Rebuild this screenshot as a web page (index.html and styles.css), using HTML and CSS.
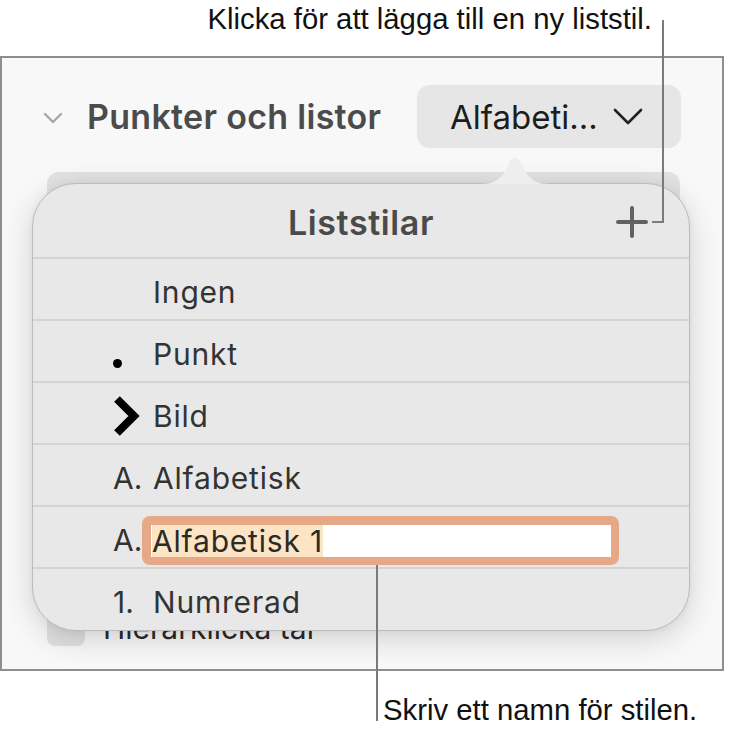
FILE: index.html
```html
<!DOCTYPE html>
<html lang="sv">
<head>
    <meta charset="UTF-8">
    <meta name="viewport" content="width=device-width, initial-scale=1.0">
    <title>Liststilar</title>
    <link rel="stylesheet" href="styles.css">
</head>
<body>
    <div class="page">
        <p class="note note-top">Klicka för att lägga till en ny liststil.</p>

        <section class="panel">
            <div class="section-head">
                <svg class="disclosure" width="20" height="12" viewBox="0 0 20 12">
                    <polyline points="2,2 10,10 18,2" fill="none" stroke="#a6a6a6" stroke-width="2.4" stroke-linecap="round" stroke-linejoin="round"/>
                </svg>
                <h2>Punkter och listor</h2>
                <button class="style-select">
                    <span>Alfabeti...</span>
                    <svg width="30" height="17" viewBox="0 0 30 17">
                        <polyline points="2,2 15,15 28,2" fill="none" stroke="#222" stroke-width="2.6" stroke-linecap="round" stroke-linejoin="round"/>
                    </svg>
                </button>
            </div>

            <div class="style-bar"></div>

            <div class="check-row">
                <span class="checkbox"></span>
                <span>Hierarklicka tal</span>
            </div>

            <div class="popover">
                <svg class="notch" width="70" height="30" viewBox="0 0 70 30">
                    <path d="M0,29 C12,29 18,26 24,18 L30,6 C32,2 38,2 40,6 L46,18 C52,26 58,29 70,29 Z" fill="#eeeeee"/>
                </svg>
                <div class="popover-head">
                    <span></span>
                    <h3>Liststilar</h3>
                    <svg class="add" width="32" height="32" viewBox="0 0 32 32">
                        <path d="M16 2 V30 M2 16 H30" stroke="#626262" stroke-width="4" stroke-linecap="round"/>
                    </svg>
                </div>
                <ul class="styles">
                    <li><span class="marker"></span>Ingen</li>
                    <li><span class="marker"><span class="dot"></span></span>Punkt</li>
                    <li>
                        <span class="marker">
                            <svg width="28" height="42" viewBox="0 0 28 42">
                                <polyline points="4,4 21,21 4,38" fill="none" stroke="#000" stroke-width="8" stroke-linejoin="miter"/>
                            </svg>
                        </span>Bild
                    </li>
                    <li><span class="marker">A.</span>Alfabetisk</li>
                    <li>
                        <span class="marker">A.</span>
                        <div class="name-field"><div class="name-inner"><span class="selected">Alfabetisk 1</span></div></div>
                    </li>
                    <li><span class="marker">1.</span>Numrerad</li>
                </ul>
            </div>
        </section>

        <p class="note note-bottom">Skriv ett namn för stilen.</p>

        <span class="leader leader-top"></span>
        <span class="leader leader-top-tick"></span>
        <span class="leader leader-bottom"></span>
    </div>
</body>
</html>
```

FILE: styles.css
```css
body {
    margin: 0;
    background: #ffffff;
    font-family: Inter, "Noto Sans", sans-serif;
}

.page {
    position: relative;
    width: 732px;
    height: 732px;
    overflow: hidden;
}

.note {
    margin: 0;
    font-family: "Liberation Sans", Arial, sans-serif;
    font-size: 29.3px;
    line-height: 36px;
    color: #111;
}

.note-top {
    height: 56px;
    padding-top: 1px;
    padding-right: 80px;
    text-align: right;
    box-sizing: border-box;
}

.note-bottom {
    margin-top: 21px;
    padding-left: 383px;
}

.leader {
    position: absolute;
    background: #7a7a7a;
}

.leader-top {
    left: 662px;
    top: 20px;
    width: 2px;
    height: 203px;
}

.leader-top-tick {
    left: 652px;
    top: 221px;
    width: 11px;
    height: 2px;
}

.leader-bottom {
    left: 376px;
    top: 565px;
    width: 2px;
    height: 156px;
}

.panel {
    position: relative;
    width: 724px;
    height: 615px;
    box-sizing: border-box;
    border: 2px solid #8e8e8e;
    background: #f8f8f8;
    padding: 27px 41px 0 41px;
}

.section-head {
    display: flex;
    align-items: center;
    height: 63px;
}

.disclosure {
    flex: none;
    margin-top: 2px;
}

.section-head h2 {
    margin: 0 0 0 24px;
    font-size: 34px;
    font-weight: 600;
    color: #4b4b4b;
    letter-spacing: 0.3px;
}

.style-select {
    margin-left: auto;
    width: 264px;
    height: 63px;
    border: none;
    border-radius: 13px;
    background: #e6e6e6;
    display: flex;
    align-items: center;
    justify-content: space-between;
    padding: 0 38px 0 33px;
    font-family: inherit;
    font-size: 33px;
    color: #1d1d1d;
}

.style-bar {
    margin: 24px 0 0 4px;
    width: 633px;
    height: 60px;
    border-radius: 12px;
    background: #e2e2e2;
}

.check-row {
    display: flex;
    align-items: center;
    margin: 378px 0 0 4px;
    font-size: 30px;
    color: #2a2a2a;
}

.checkbox {
    width: 38px;
    height: 36px;
    border-radius: 8px;
    background: #e0e0e0;
    margin-right: 18px;
}

.popover {
    position: absolute;
    left: 30px;
    top: 125px;
    width: 658px;
    height: 448px;
    box-sizing: border-box;
    border: 1px solid #bcbcbc;
    border-radius: 44px;
    background: #e8e8e8;
    box-shadow: 0 8px 30px rgba(0, 0, 0, 0.16), 0 0 6px rgba(0, 0, 0, 0.05);
}

.notch {
    position: absolute;
    left: 447px;
    top: -29px;
}

.popover-head {
    display: grid;
    grid-template-columns: 1fr auto 1fr;
    align-items: center;
    height: 73px;
    border-bottom: 2px solid #d3d3d3;
}

.popover-head h3 {
    margin: 0;
    font-size: 34px;
    font-weight: 600;
    color: #4a4a4a;
    letter-spacing: 0.6px;
    padding-top: 4px;
}

.add {
    justify-self: end;
    margin-right: 41px;
    margin-top: 2px;
}

.styles {
    list-style: none;
    margin: 0;
    padding: 0;
}

.styles li {
    display: flex;
    align-items: center;
    height: 54px;
    padding-top: 6px;
    padding-left: 80px;
    border-bottom: 2px solid #d3d3d3;
    font-size: 30px;
    line-height: 1;
    letter-spacing: 0.8px;
    color: #333333;
}

.styles li:last-child {
    border-bottom: none;
}

.marker {
    width: 40px;
    flex: none;
    display: flex;
    align-items: center;
    letter-spacing: 0;
}

.dot {
    width: 9px;
    height: 9px;
    border-radius: 50%;
    background: #000;
    margin-top: 19px;
}

.name-field {
    margin: 0 0 0 -11px;
    width: 477px;
    height: 49px;
    box-sizing: border-box;
    padding: 9px 8px 8px 9px;
    border-radius: 8px;
    background: #e6a886;
}

.name-inner {
    height: 100%;
    background: #ffffff;
    display: flex;
    align-items: center;
    padding-left: 1px;
}

.selected {
    background: #fde4c4;
    height: 100%;
    display: flex;
    align-items: center;
    color: #2a2a2a;
}
```
